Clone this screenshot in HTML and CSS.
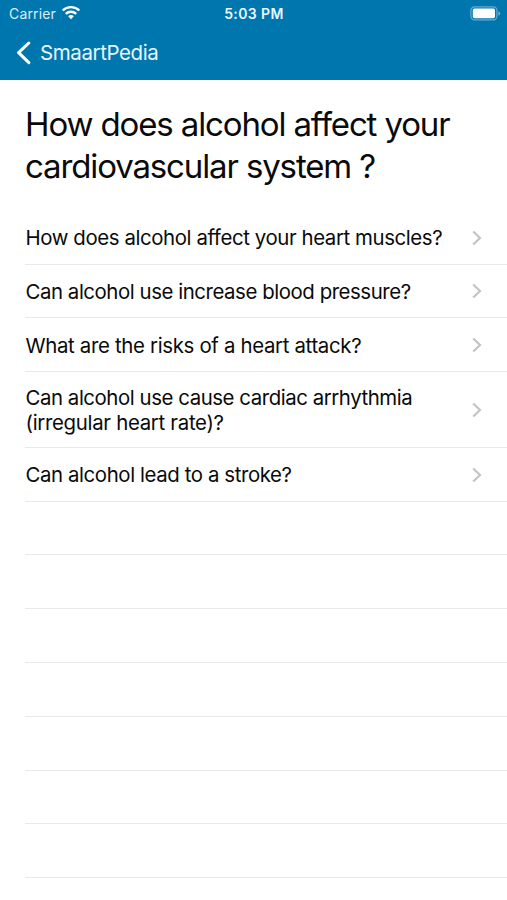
FILE: index.html
```html
<!DOCTYPE html>
<html lang="en">
<head>
<meta charset="utf-8">
<title>SmaartPedia</title>
<link rel="stylesheet" href="styles.css">
</head>
<body>
<header class="header">
  <div class="status">
    <div class="status-left">
      <span class="carrier">Carrier</span>
      <svg class="wifi" width="20" height="15" viewBox="0 0 20 15" fill="none" stroke="#fff" stroke-width="2.4"><path d="M1.7 5.5a12 12 0 0 1 16.6 0M4.8 8.8a7.5 7.5 0 0 1 10.4 0"/><path d="M10 14.2 7.1 11.3a4.2 4.2 0 0 1 5.8 0Z" fill="#fff" stroke="none"/></svg>
    </div>
    <span class="time">5:03 PM</span>
    <svg class="battery" width="31" height="15" viewBox="0 0 31 15"><rect x=".9" y=".9" width="26" height="13" rx="3.6" fill="none" stroke="#fff" stroke-opacity=".4" stroke-width="1.2"/><rect x="2.8" y="2.6" width="22.2" height="9.6" rx="1.6" fill="#fff"/><path d="M28.4 5.2v4.6q1.8-.8 1.8-2.3t-1.8-2.3Z" fill="#fff" fill-opacity=".45"/></svg>
  </div>
  <nav class="nav">
    <svg class="back" width="16" height="24" viewBox="0 0 16 24" fill="none" stroke="#fff" stroke-width="3" stroke-linecap="round" stroke-linejoin="round"><path d="M13.8 2 3.6 11.7 13.8 21.6"/></svg>
    <span class="nav-title">SmaartPedia</span>
  </nav>
</header>
<main>
  <h1 class="title">How does alcohol affect your<br>cardiovascular system ?</h1>
  <ul class="list">
    <li class="row"><span class="label">How does alcohol affect your heart muscles?</span><svg class="chevron" viewBox="0 0 10 16"><path d="M1.2 1.5 8 8 1.2 14.5"/></svg></li>
    <li class="row"><span class="label snug">Can alcohol use increase blood pressure?</span><svg class="chevron" viewBox="0 0 10 16"><path d="M1.2 1.5 8 8 1.2 14.5"/></svg></li>
    <li class="row"><span class="label loose">What are the risks of a heart attack?</span><svg class="chevron" viewBox="0 0 10 16"><path d="M1.2 1.5 8 8 1.2 14.5"/></svg></li>
    <li class="row tall"><span class="label snug">Can alcohol use cause cardiac arrhythmia<br><span class="loose">(irregular heart rate)?</span></span><svg class="chevron" viewBox="0 0 10 16"><path d="M1.2 1.5 8 8 1.2 14.5"/></svg></li>
    <li class="row"><span class="label">Can alcohol lead to a stroke?</span><svg class="chevron" viewBox="0 0 10 16"><path d="M1.2 1.5 8 8 1.2 14.5"/></svg></li>
    <li class="row"></li>
    <li class="row"></li>
    <li class="row"></li>
    <li class="row"></li>
    <li class="row"></li>
    <li class="row"></li>
    <li class="row"></li>
  </ul>
</main>
</body>
</html>
```
FILE: styles.css
```css
* { box-sizing: border-box; }
body {
  margin: 0;
  height: 900px;
  overflow: hidden;
  background: #fff;
  color: #0a0a0a;
  font-family: Inter, "Liberation Sans", sans-serif;
}
.header { height: 80px; background: #0076af; color: #fff; }
.status {
  display: grid;
  grid-template-columns: 1fr auto 1fr;
  align-items: center;
  height: 27px;
  padding: 0 7px 0 8px;
}
.status-left { display: flex; align-items: center; gap: 5px; }
.carrier { padding-left: 1px; font-size: 14px; letter-spacing: 0.15px; color: #d9effa; }
.wifi { margin-top: -2px; }
.time { font-size: 14px; font-weight: 600; letter-spacing: 0.4px; color: #e8f6fd; }
.battery { justify-self: end; margin-right: -1px; }
.nav { display: flex; align-items: center; height: 51px; padding-left: 15px; gap: 9px; }
.nav-title { font-size: 20.5px; letter-spacing: -0.4px; color: #e8f6fd; }
.title {
  margin: 0;
  height: 130.8px;
  padding: 23px 0 0 25px;
  font-size: 33px;
  font-weight: 400;
  line-height: 42px;
  letter-spacing: -1.13px;
  white-space: nowrap;
}
.list { margin: 0 0 0 25px; padding: 0; list-style: none; }
.row {
  display: flex;
  align-items: center;
  justify-content: space-between;
  height: 53.8px;
  padding: 2px 25px 0 0;
  border-bottom: 1px solid #e9e9ea;
}
.tall { height: 75.6px; }
.label { padding-left: 0.5px; padding-top: 1px; font-size: 20.4px; line-height: 24.5px; letter-spacing: -0.4px; white-space: nowrap; }
.snug { letter-spacing: -0.44px; }
.loose { letter-spacing: -0.33px; }
.snug .loose { letter-spacing: -0.3px; }
.chevron {
  width: 10px;
  height: 16px;
  margin-top: -1px;
  fill: none;
  stroke: #c4c4c6;
  stroke-width: 2.2;
}
```
